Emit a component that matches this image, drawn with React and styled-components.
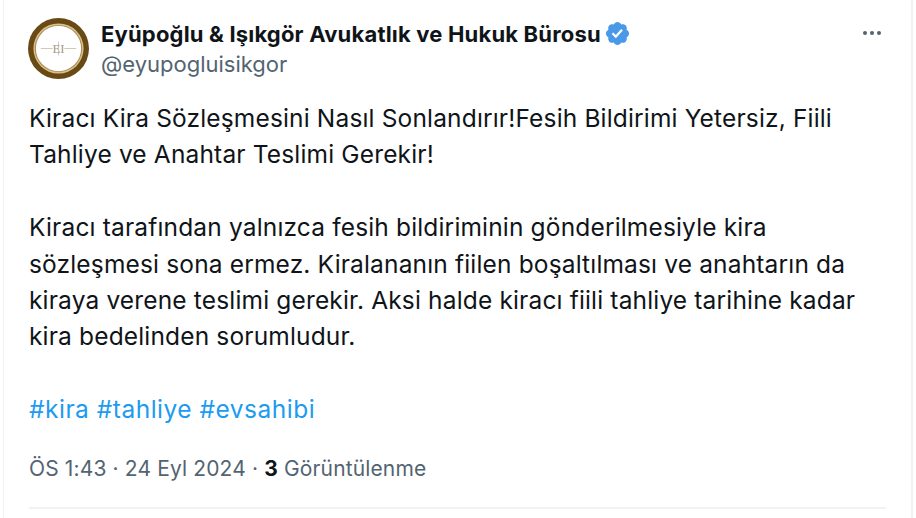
import React from "react";
import styled, { createGlobalStyle } from "styled-components";

const GlobalStyle = createGlobalStyle`
  html, body {
    margin: 0;
    padding: 0;
    background: #fff;
  }
  body {
    font-family: "Inter", "Liberation Sans", sans-serif;
    color: #0f1419;
  }
`;

const Page = styled.div`
  width: 916px;
  height: 518px;
  overflow: hidden;
  background: #fff;
`;

const Card = styled.article`
  width: 910px;
  height: 518px;
  margin-left: 3px;
  box-sizing: border-box;
  border-left: 1.5px solid #eff3f4;
  border-right: 2px solid #eff3f4;
  padding: 18px 25px 0 25px;
`;

const Header = styled.header`
  display: flex;
  align-items: flex-start;
  gap: 12px;
`;

const Avatar = styled.svg`
  flex: none;
  width: 61px;
  height: 61px;
  margin-left: -1px;
`;

const Names = styled.div`
  flex: 1;
  padding-top: 1px;
`;

const NameRow = styled.div`
  display: flex;
  align-items: center;
  gap: 3px;
  height: 29px;
`;

const DisplayName = styled.span`
  font-size: 22px;
  font-weight: 700;
  letter-spacing: 0.18px;
`;

const Handle = styled.div`
  margin-top: 2px;
  font-size: 22px;
  line-height: 29px;
  color: #536471;
`;

const More = styled.svg`
  flex: none;
  width: 24px;
  height: 24px;
  margin: 3px 2px 0 0;
  fill: #536471;
`;

const Body = styled.div`
  margin-top: 21px;
  font-size: 24.5px;
  line-height: 36.4px;
  letter-spacing: 0.16px;
`;

const Paragraph = styled.p`
  margin: 0 0 36.4px 0;
`;

const Hashtag = styled.span`
  color: #1d9bf0;
  letter-spacing: 0.5px;
`;

const Meta = styled.div`
  margin-top: -9px;
  font-size: 21px;
  line-height: 28px;
  color: #536471;
  letter-spacing: 0.14px;
`;

const Views = styled.strong`
  font-weight: 700;
  color: #0f1419;
`;

const Divider = styled.div`
  height: 2px;
  margin-top: 24px;
  background: #eff3f4;
`;

const LogoMark = () => (
  <Avatar viewBox="0 0 62 62">
    <circle cx="31" cy="31" r="31" fill="#6a4a14" />
    <circle cx="31" cy="31" r="25.5" fill="#d9c08c" />
    <circle cx="31" cy="31" r="24" fill="#a88a50" />
    <circle cx="31" cy="31" r="23" fill="#ffffff" />
    <path d="M13 31H25M37 31H49M31 24V38" stroke="#cfc9b4" strokeWidth="1" fill="none" />
    <text x="31" y="36" textAnchor="middle" fontSize="13" fontFamily="Liberation Serif, serif" fill="#a49c84">
      EI
    </text>
  </Avatar>
);

const VerifiedBadge = () => (
  <svg viewBox="0 0 22 22" width="27" height="27">
    <path
      fill="#4a99e9"
      d="M20.396 11c-.018-.646-.215-1.275-.57-1.816-.354-.54-.852-.972-1.438-1.246.223-.607.27-1.264.14-1.897-.131-.634-.437-1.218-.882-1.687-.47-.445-1.053-.75-1.687-.882-.633-.13-1.29-.083-1.897.14-.273-.587-.704-1.086-1.245-1.44S11.647 1.62 11 1.604c-.646.017-1.273.213-1.813.568s-.969.854-1.24 1.44c-.608-.223-1.267-.272-1.902-.14-.635.13-1.22.436-1.69.882-.445.47-.749 1.055-.878 1.688-.13.633-.08 1.29.144 1.896-.587.274-1.087.705-1.443 1.245-.356.54-.555 1.17-.574 1.817.02.647.218 1.276.574 1.817.356.54.856.972 1.443 1.245-.224.606-.274 1.263-.144 1.896.13.634.433 1.218.877 1.688.47.443 1.054.747 1.687.878.633.132 1.29.084 1.897-.136.274.586.705 1.084 1.246 1.439.54.354 1.17.551 1.816.569.647-.016 1.276-.213 1.817-.567s.972-.854 1.245-1.44c.604.239 1.266.296 1.903.164.636-.132 1.22-.447 1.68-.907.46-.46.776-1.044.908-1.681s.075-1.299-.165-1.903c.586-.274 1.084-.705 1.439-1.246.354-.54.551-1.17.569-1.816z"
    />
    <path fill="#fff" d="M9.662 14.85l-3.429-3.428 1.293-1.302 2.072 2.072 4.4-4.794 1.347 1.246z" />
  </svg>
);

const App = () => {
  return (
    <Page>
      <GlobalStyle />
      <Card>
        <Header>
          <LogoMark />
          <Names>
            <NameRow>
              <DisplayName>Eyüpoğlu &amp; Işıkgör Avukatlık ve Hukuk Bürosu</DisplayName>
              <VerifiedBadge />
            </NameRow>
            <Handle>@eyupogluisikgor</Handle>
          </Names>
          <More viewBox="0 0 24 24">
            <circle cx="5" cy="12" r="2" />
            <circle cx="12" cy="12" r="2" />
            <circle cx="19" cy="12" r="2" />
          </More>
        </Header>
        <Body>
          <Paragraph>
            Kiracı Kira Sözleşmesini Nasıl Sonlandırır!Fesih Bildirimi Yetersiz, Fiili
            <br />
            Tahliye ve Anahtar Teslimi Gerekir!
          </Paragraph>
          <Paragraph>
            Kiracı tarafından yalnızca fesih bildiriminin gönderilmesiyle kira
            <br />
            sözleşmesi sona ermez. Kiralananın fiilen boşaltılması ve anahtarın da
            <br />
            kiraya verene teslimi gerekir. Aksi halde kiracı fiili tahliye tarihine kadar
            <br />
            kira bedelinden sorumludur.
          </Paragraph>
          <Paragraph>
            <Hashtag>#kira #tahliye #evsahibi</Hashtag>
          </Paragraph>
        </Body>
        <Meta>
          ÖS 1:43 · 24 Eyl 2024 · <Views>3</Views> Görüntülenme
        </Meta>
        <Divider />
      </Card>
    </Page>
  );
};

export default App;
